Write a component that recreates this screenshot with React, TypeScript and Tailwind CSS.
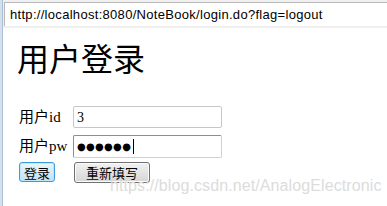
import React from 'react';

const cjkSerif = { fontFamily: '"Liberation Serif", "Noto Sans CJK SC", serif' };

export default function App() {
  return (
    <div className="relative flex w-[387px] h-[206px] overflow-hidden bg-white">
      {/* window frame strip */}
      <div className="w-[3px] h-full bg-[#d3e0ef] border-r border-[#aebfd4]" />

      <div className="flex-1 flex flex-col">
        {/* address bar */}
        <div className="h-[28px] pt-[2px] pl-[1px] bg-[#f0f0f0]">
          <div className="h-[24px] flex items-center pl-[5px] bg-white border-t border-l border-[#b9b9b9]">
            <span className="text-[13px] tracking-[0.3px] text-black font-['Liberation_Sans',sans-serif]">
              http://localhost:8080/NoteBook/login.do?flag=logout
            </span>
          </div>
        </div>

        {/* page */}
        <div className="flex-1 pl-[14px] pt-[16px] text-black" style={cjkSerif}>
          <h1 className="text-[32px] leading-none font-normal">用户登录</h1>

          <div className="mt-[30px] flex flex-col gap-[6px]">
            <div className="flex items-center">
              <span className="w-[56px] pl-[2px] text-[15px]">用户id</span>
              <div className="w-[149px] h-[22px] flex items-center px-[3px] border border-[#c7c7c7] rounded-[2px] text-[14px] text-[#000]">
                3
              </div>
            </div>
            <div className="flex items-center">
              <span className="w-[56px] pl-[2px] text-[15px]">用户pw</span>
              <div className="w-[149px] h-[23px] flex items-center px-[3px] border border-[#5b9bd5] border-b-[#b9d6f0] border-r-[#b9d6f0] rounded-[2px]">
                <span className="text-[10px] tracking-[0.3px] font-['DejaVu_Sans',sans-serif]">●●●●●●</span>
                <span className="w-px h-[15px] bg-black ml-[2px]" />
              </div>
            </div>
          </div>

          <div className="mt-[4px] flex items-center gap-[19px] pl-[2px] font-['Noto_Sans_CJK_SC',sans-serif]">
            <button className="w-[36px] h-[20px] flex items-center justify-center text-[13px] leading-none border border-[#3c9bd8] rounded-[3px] bg-gradient-to-b from-[#eaf6fd] to-[#c0e1f4] shadow-[inset_0_0_0_1px_#bfe6fb]">
              登录
            </button>
            <button className="w-[76px] h-[21px] flex items-center justify-center text-[13px] leading-none border border-[#707070] rounded-[3px] bg-gradient-to-b from-[#f2f2f2] to-[#d5d5d5] shadow-[inset_0_0_0_1px_#fbfbfb]">
              重新填写
            </button>
          </div>
        </div>
      </div>

      {/* watermark */}
      <span className="absolute left-[110px] top-[177px] text-[16px] tracking-[0.1px] leading-[18px] text-[#dcdcdc] font-['Liberation_Sans',sans-serif] pointer-events-none">
        https://blog.csdn.net/AnalogElectronic
      </span>
    </div>
  );
}
